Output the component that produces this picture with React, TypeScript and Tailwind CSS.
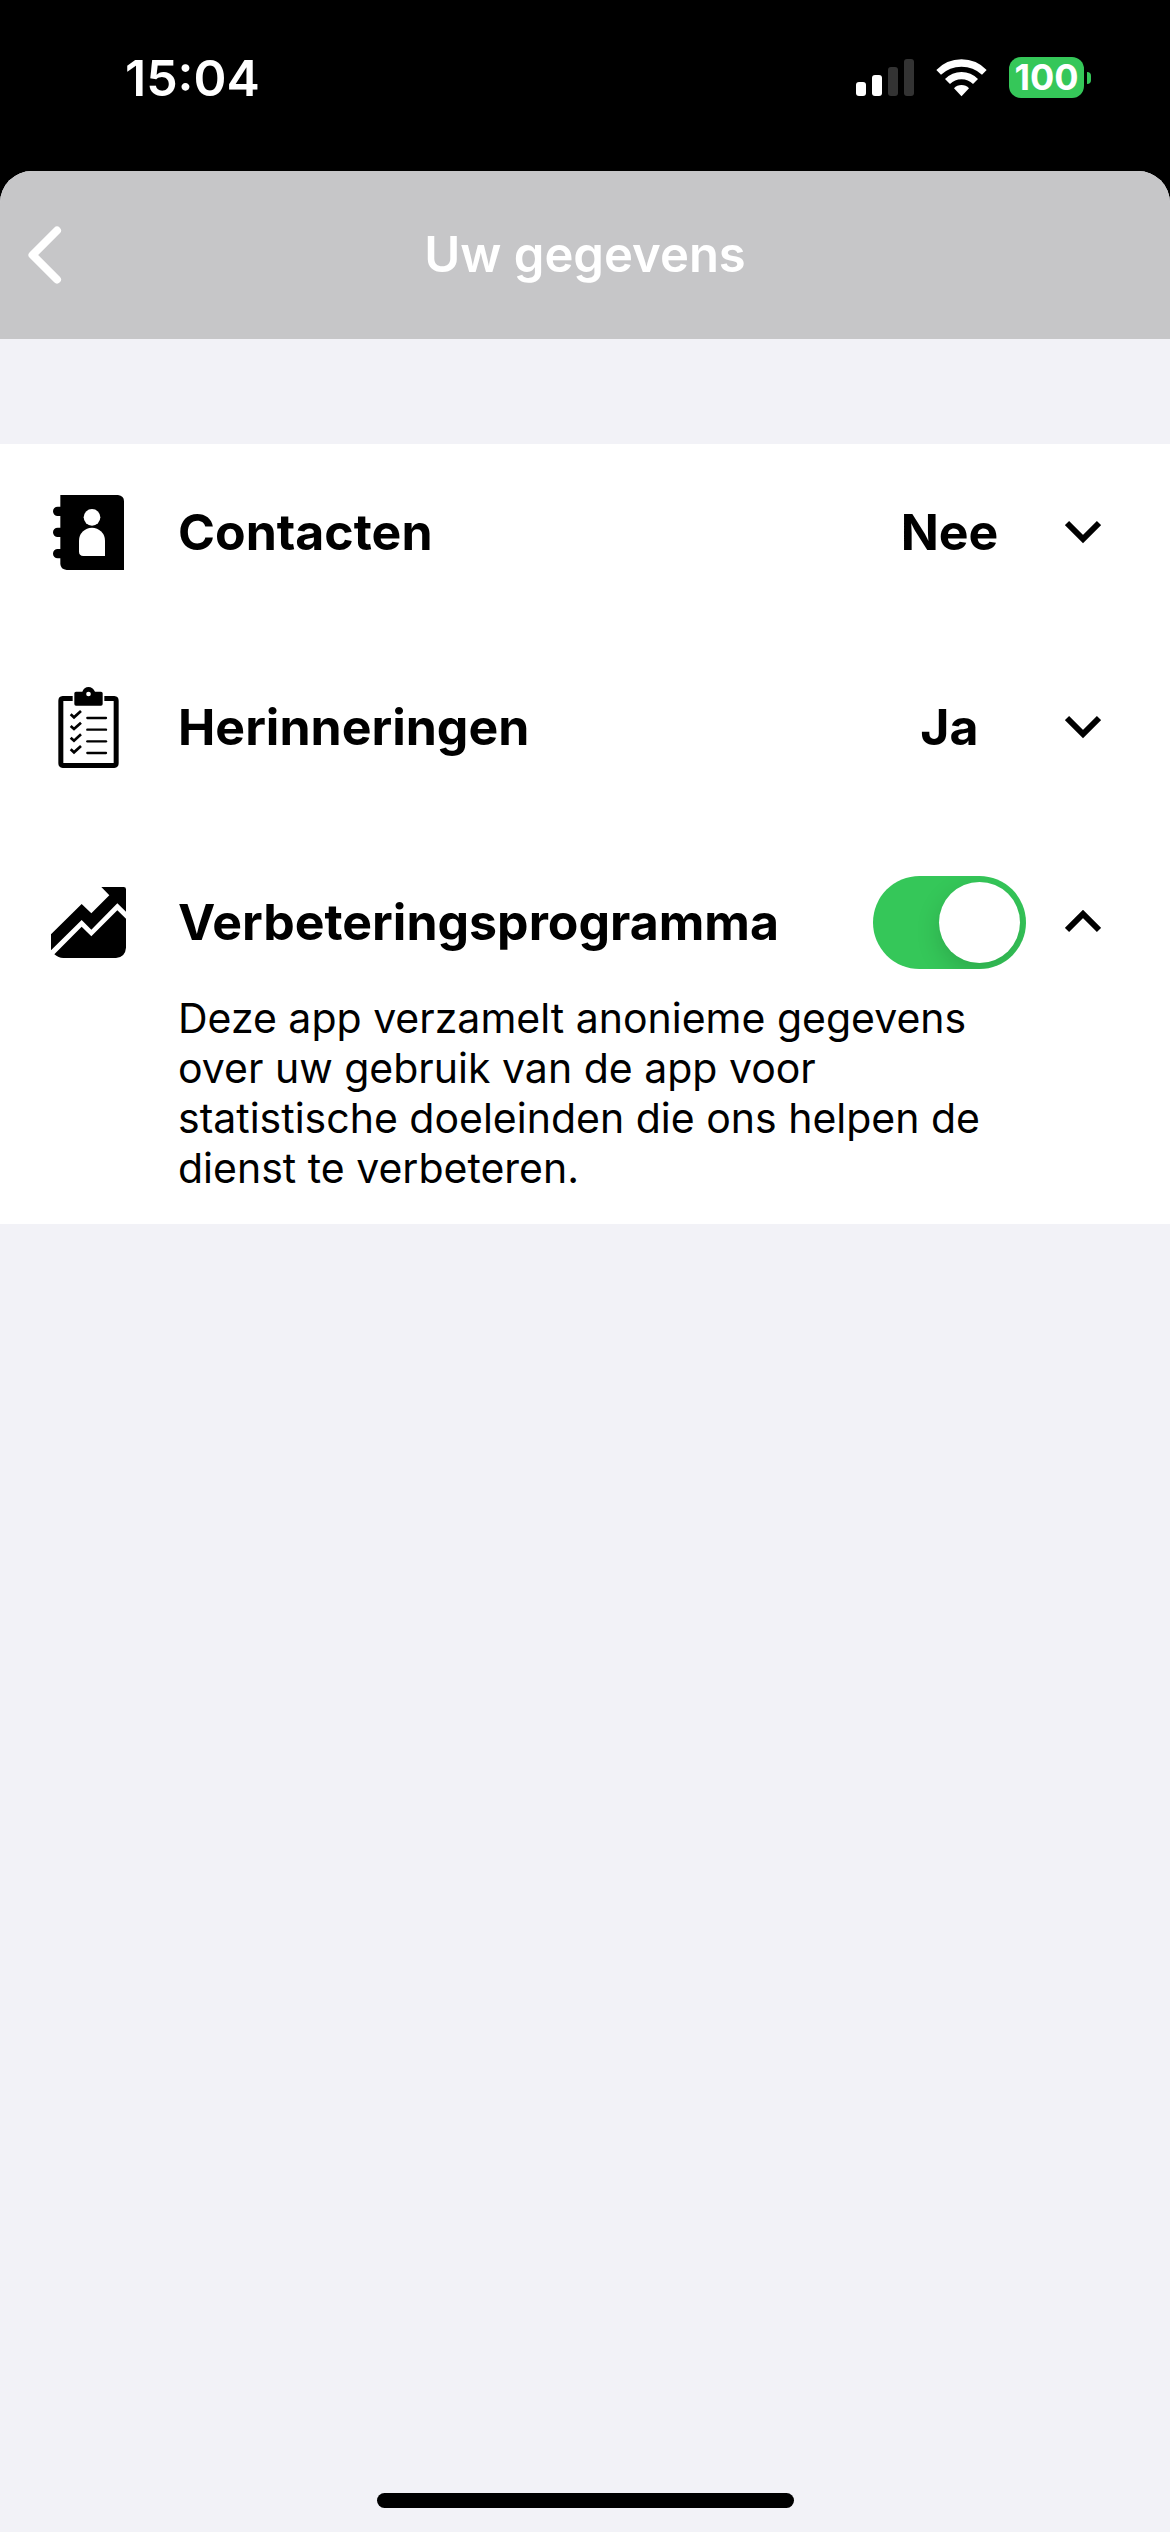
import { useState } from 'react';
import type { ReactNode } from 'react';

function SignalIcon() {
  return (
    <svg className="w-[58px] h-[38px]" viewBox="0 0 58 38" aria-hidden="true">
      <rect x="0" y="23" width="10" height="14" rx="3" fill="#fff" />
      <rect x="16" y="16" width="10" height="21" rx="3" fill="#fff" />
      <rect x="32" y="8" width="10" height="29" rx="3" fill="#333" />
      <rect x="48" y="0" width="10" height="37" rx="3" fill="#333" />
    </svg>
  );
}

function WifiIcon() {
  return (
    <svg className="w-[51px] h-[38px]" viewBox="348 86 153 114" fill="#fff" aria-hidden="true">
      <path d="M349 119Q380 87 424.500 87Q469 87 500 119L486 133Q460 109 424.500 109Q389 109 363 133Z" />
      <path d="M375 146Q396 125 424.500 125Q453 125 474 146L459 161Q445 147 424.500 147Q404 147 390 161Z" />
      <path d="M402 174Q411 164 424.500 164Q438 164 447 174L424.500 198Z" />
    </svg>
  );
}

function BackIcon() {
  return (
    <svg className="w-[34px] h-[58px]" viewBox="0 0 34 58" fill="none" stroke="#fff" aria-hidden="true">
      <path d="M29 4.500L4.500 29L29 53.500" strokeWidth="8" strokeLinecap="round" strokeLinejoin="round" />
    </svg>
  );
}

function ContactsIcon() {
  return (
    <svg className="w-[82px] h-[82px]" viewBox="54 63 246 246" aria-hidden="true">
      <path d="M91 75H264Q282 77 282 94V300H110Q92 298 91 282V265H83A14 14 0 0 1 83 237H91V201H83A14 14 0 0 1 83 173H91V138H83A14 14 0 0 1 83 110H91Z" />
      <circle cx="186" cy="142" r="25" fill="#fff" />
      <path d="M147 212A39 39 0 0 1 225 212V258H160Q147 257 147 245Z" fill="#fff" />
    </svg>
  );
}

function RemindersIcon() {
  const rows = [144, 179, 214, 249];

  return (
    <svg className="w-[82px] h-[82px]" viewBox="54 48 246 246" aria-hidden="true">
      <path d="M128 78H98Q85 79 85 92V280Q85 293 98 294H253Q266 293 266 280V92Q266 79 253 78H223V93H251V279H100V93H128Z" />
      <path
        fillRule="evenodd"
        d="M138 65H157C160 56 167 51 175.500 51S191 56 195 65H213Q218 65 218 70V102Q218 107 213 107H138Q133 107 133 102V70Q133 65 138 65ZM175.500 65A7 7 0 1 0 175.500 79A7 7 0 1 0 175.500 65Z"
      />
      {rows.map((y) => (
        <g key={y} fill="none" stroke="#000">
          <path d={`M172 ${y}H228`} strokeWidth="7" strokeLinecap="round" />
          <path d={`M122 ${y - 11}L132 ${y - 2}L153 ${y - 21}`} strokeWidth="8" />
        </g>
      ))}
    </svg>
  );
}

function ProgramIcon() {
  return (
    <svg className="w-[82px] h-[82px]" viewBox="54 63 246 246" aria-hidden="true">
      <path d="M63 223L155 132L184 160L238 106L214 81H281Q288 81 288 88V155L262 130L184 209L155 180L63 271Z" />
      <path d="M155 200L184 229L262 151L288 176V263Q286 291 258 294H100Q85 294 73 283Z" />
    </svg>
  );
}

function ChevronIcon({ up }: { up: boolean }) {
  return (
    <svg className="w-9 h-6" viewBox="0 0 36 24" fill="none" stroke="#000" strokeWidth="6" aria-hidden="true">
      <path d={up ? 'M2 20L18 4L34 20' : 'M2 3L18 19L34 3'} />
    </svg>
  );
}

interface SettingProps {
  icon: ReactNode;
  title: string;
  control: ReactNode;
  open: boolean;
  onToggle: () => void;
  children: ReactNode;
}

function Setting({ icon, title, control, open, onToggle, children }: SettingProps) {
  return (
    <li>
      <div className="flex items-center h-[116px] pl-12 pr-[69px]">
        {icon}
        <h2 className="flex-1 ml-12 text-[50px] leading-[60px] font-bold">{title}</h2>
        <div className="w-[153px] flex justify-center text-[50px] leading-[60px] font-bold">{control}</div>
        <button type="button" onClick={onToggle} aria-expanded={open} aria-label={title} className="ml-[39px] py-4">
          <ChevronIcon up={open} />
        </button>
      </div>
      {open && <p className="mt-[13px] pl-[178px] pr-[170px] text-[41px] leading-[50px]">{children}</p>}
    </li>
  );
}

export default function App() {
  const [openSetting, setOpenSetting] = useState('program');
  const [program, setProgram] = useState(true);

  const toggle = (name: string) => setOpenSetting(openSetting === name ? '' : name);

  return (
    <div className="min-h-screen flex flex-col bg-black text-black font-['Inter',sans-serif]">
      {/* Status bar */}
      <div className="flex items-center justify-between h-[171px] pb-4 pl-[125px] pr-[79px] text-white">
        <span className="text-[50px] leading-[60px] font-semibold">15:04</span>
        <div className="flex items-center">
          <SignalIcon />
          <div className="ml-[22px]">
            <WifiIcon />
          </div>
          <div className="ml-[22px] flex items-center">
            <span className="w-[75px] h-[41px] rounded-xl bg-[#35c759] text-center text-[36px] leading-[41px] font-bold">
              100
            </span>
            <span className="ml-[3px] w-1 h-3 rounded-r-full bg-[#35c759]"></span>
          </div>
        </div>
      </div>

      <div className="flex-1 flex flex-col rounded-t-[32px] overflow-hidden bg-[#f2f2f7]">
        <header className="grid grid-cols-[1fr_auto_1fr] items-center h-[168px] px-7 bg-[#c6c6c8] text-white">
          <button type="button" aria-label="Terug" className="justify-self-start">
            <BackIcon />
          </button>
          <h1 className="text-[49px] leading-[60px] font-semibold">Uw gegevens</h1>
        </header>

        <main className="flex-1 pt-[105px]">
          <ul className="flex flex-col gap-[79px] pt-[30px] pb-[31px] bg-white">
            <Setting
              icon={<ContactsIcon />}
              title="Contacten"
              control="Nee"
              open={openSetting === 'contacts'}
              onToggle={() => toggle('contacts')}
            >
              Deze app heeft geen toegang tot uw contacten.
            </Setting>
            <Setting
              icon={<RemindersIcon />}
              title="Herinneringen"
              control="Ja"
              open={openSetting === 'reminders'}
              onToggle={() => toggle('reminders')}
            >
              Deze app heeft toegang tot uw herinneringen.
            </Setting>
            <Setting
              icon={<ProgramIcon />}
              title="Verbeteringsprogramma"
              control={
                <input
                  type="checkbox"
                  role="switch"
                  aria-label="Verbeteringsprogramma"
                  checked={program}
                  onChange={(e) => setProgram(e.target.checked)}
                  className="appearance-none flex w-[153px] h-[93px] p-1.5 rounded-full overflow-hidden bg-gray-200 checked:bg-[#35c759] checked:justify-end before:block before:w-[81px] before:h-[81px] before:rounded-full before:bg-white before:shadow-[0_9px_24px_rgba(0,0,0,0.15)]"
                />
              }
              open={openSetting === 'program'}
              onToggle={() => toggle('program')}
            >
              Deze app verzamelt anonieme gegevens over uw gebruik van de app voor statistische doeleinden die ons
              helpen de dienst te verbeteren.
            </Setting>
          </ul>
        </main>

        {/* Home indicator */}
        <div className="self-center w-[417px] h-[15px] mb-6 rounded-full bg-black"></div>
      </div>
    </div>
  );
}
